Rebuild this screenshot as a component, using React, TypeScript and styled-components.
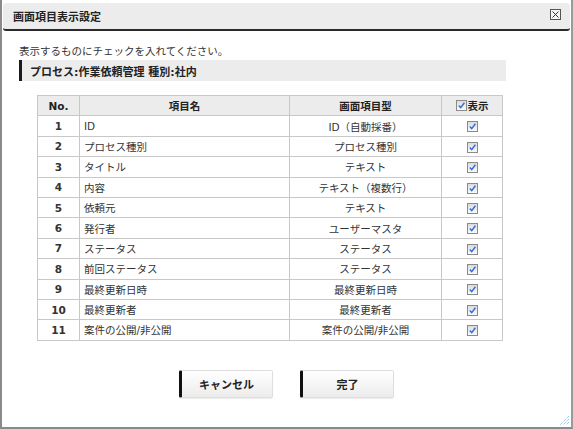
import React from "react";
import styled, { createGlobalStyle } from "styled-components";

const Global = createGlobalStyle`
  html, body { margin: 0; padding: 0; background: #fff; }
  body { font-family: "DejaVu Sans", "Noto Sans CJK JP", sans-serif; font-size: 11px; color: #222; }
`;

const Window = styled.div`
  position: relative;
  width: 573px;
  height: 429px;
  box-sizing: border-box;
  border-left: 2px solid #8a8a8a;
  border-right: 2px solid #9a9a9a;
  border-bottom: 2px solid #8a8a8a;
  padding: 3px 1px 0 1px;
  display: flex;
  flex-direction: column;
  background: #fff;
`;

const TitleBar = styled.div`
  height: 26px;
  background: #ececec;
  border-radius: 4px 4px 3px 3px;
  border-bottom: 2px solid #2a2a2a;
  display: flex;
  align-items: center;
  justify-content: space-between;
  padding: 0 9px 0 10px;
`;

const Title = styled.div`
  font-weight: bold;
  font-size: 11px;
  color: #222;
`;

const CloseBox = styled.div`
  width: 9px;
  height: 9px;
  border: 1px solid #555;
  display: flex;
  align-items: center;
  justify-content: center;
  margin-top: -4px;
  background: #f6f6f6;
`;

const Body = styled.div`
  padding: 13px 17px 0 16px;
  display: flex;
  flex-direction: column;
`;

const Instruction = styled.div`
  font-size: 10.5px;
  line-height: 14px;
  color: #333;
`;

const SubHeader = styled.div`
  margin-top: 2px;
  height: 21px;
  background: #ececec;
  border-left: 3px solid #1a1a1a;
  display: flex;
  align-items: center;
  padding-left: 8px;
  font-weight: bold;
  font-size: 11px;
  color: #222;
  width: 476px;
`;

const Table = styled.table`
  margin: 14px 0 0 18px;
  border-collapse: collapse;
  width: 465px;
  table-layout: fixed;
  td, th {
    border: 1px solid #c8c8c8;
    height: 19.4px;
    padding: 0 4px;
    font-size: 10.5px;
    color: #333;
  }
  th {
    background: #ececec;
    font-weight: bold;
    color: #222;
  }
`;

const Cell = styled.td<{ $align?: string; $bold?: boolean }>`
  text-align: ${(p) => p.$align || "left"};
  font-weight: ${(p) => (p.$bold ? "bold" : "normal")};
`;

const CheckWrap = styled.span`
  display: inline-flex;
  align-items: center;
  vertical-align: middle;
`;

const Box = styled.span`
  display: inline-block;
  width: 9px;
  height: 9px;
  border: 1px solid #8a8a8a;
  background: linear-gradient(#dcdcdc, #fafafa);
  position: relative;
  svg { position: absolute; left: 0; top: 0; }
`;

const HeadCheck = styled.span`
  display: inline-flex;
  align-items: center;
  gap: 1px;
`;

const Buttons = styled.div`
  display: flex;
  justify-content: center;
  gap: 27px;
  margin-top: 29px;
`;

const Button = styled.button`
  width: 94px;
  height: 28px;
  border: 1px solid #dedede;
  border-left: 3px solid #111;
  border-radius: 2px;
  background: linear-gradient(#ffffff, #ececec);
  box-shadow: 0 1px 1px rgba(0,0,0,0.08);
  font-family: "DejaVu Sans", "Noto Sans CJK JP", sans-serif;
  font-weight: bold;
  font-size: 11px;
  color: #222;
`;

const Grip = styled.div`
  position: absolute;
  right: 1px;
  bottom: 1px;
  width: 12px;
  height: 12px;
`;

function Check() {
  return (
    <CheckWrap>
      <Box>
        <svg width="9" height="9" viewBox="0 0 9 9">
          <path d="M1.8 4.6 L3.7 6.6 L7.4 1.8" fill="none" stroke="#2f6bd6" strokeWidth="1.4" />
        </svg>
      </Box>
    </CheckWrap>
  );
}

const rows: [number, string, string][] = [
  [1, "ID", "ID（自動採番）"],
  [2, "プロセス種別", "プロセス種別"],
  [3, "タイトル", "テキスト"],
  [4, "内容", "テキスト（複数行）"],
  [5, "依頼元", "テキスト"],
  [6, "発行者", "ユーザーマスタ"],
  [7, "ステータス", "ステータス"],
  [8, "前回ステータス", "ステータス"],
  [9, "最終更新日時", "最終更新日時"],
  [10, "最終更新者", "最終更新者"],
  [11, "案件の公開/非公開", "案件の公開/非公開"],
];

export default function App() {
  return (
    <>
      <Global />
      <Window>
        <TitleBar>
          <Title>画面項目表示設定</Title>
          <CloseBox>
            <svg width="7" height="7" viewBox="0 0 7 7">
              <path d="M0.5 0.5 L6.5 6.5 M6.5 0.5 L0.5 6.5" stroke="#333" strokeWidth="1" />
            </svg>
          </CloseBox>
        </TitleBar>
        <Body>
          <Instruction>表示するものにチェックを入れてください。</Instruction>
          <SubHeader>プロセス:作業依頼管理 種別:社内</SubHeader>
          <Table>
            <colgroup>
              <col style={{ width: 42 }} />
              <col style={{ width: 210 }} />
              <col style={{ width: 152 }} />
              <col style={{ width: 61 }} />
            </colgroup>
            <thead>
              <tr>
                <th>No.</th>
                <th>項目名</th>
                <th>画面項目型</th>
                <th>
                  <HeadCheck>
                    <Check />
                    表示
                  </HeadCheck>
                </th>
              </tr>
            </thead>
            <tbody>
              {rows.map(([n, name, type]) => (
                <tr key={n}>
                  <Cell $align="center" $bold>{n}</Cell>
                  <Cell>{name}</Cell>
                  <Cell $align="center">{type}</Cell>
                  <Cell $align="center"><Check /></Cell>
                </tr>
              ))}
            </tbody>
          </Table>
          <Buttons>
            <Button>キャンセル</Button>
            <Button>完了</Button>
          </Buttons>
        </Body>
        <Grip>
          <svg width="12" height="12" viewBox="0 0 12 12">
            <path d="M11 2 L2 11 M11 5 L5 11 M11 8 L8 11" stroke="#6ab4ee" strokeWidth="1" strokeDasharray="1 1" />
          </svg>
        </Grip>
      </Window>
    </>
  );
}
